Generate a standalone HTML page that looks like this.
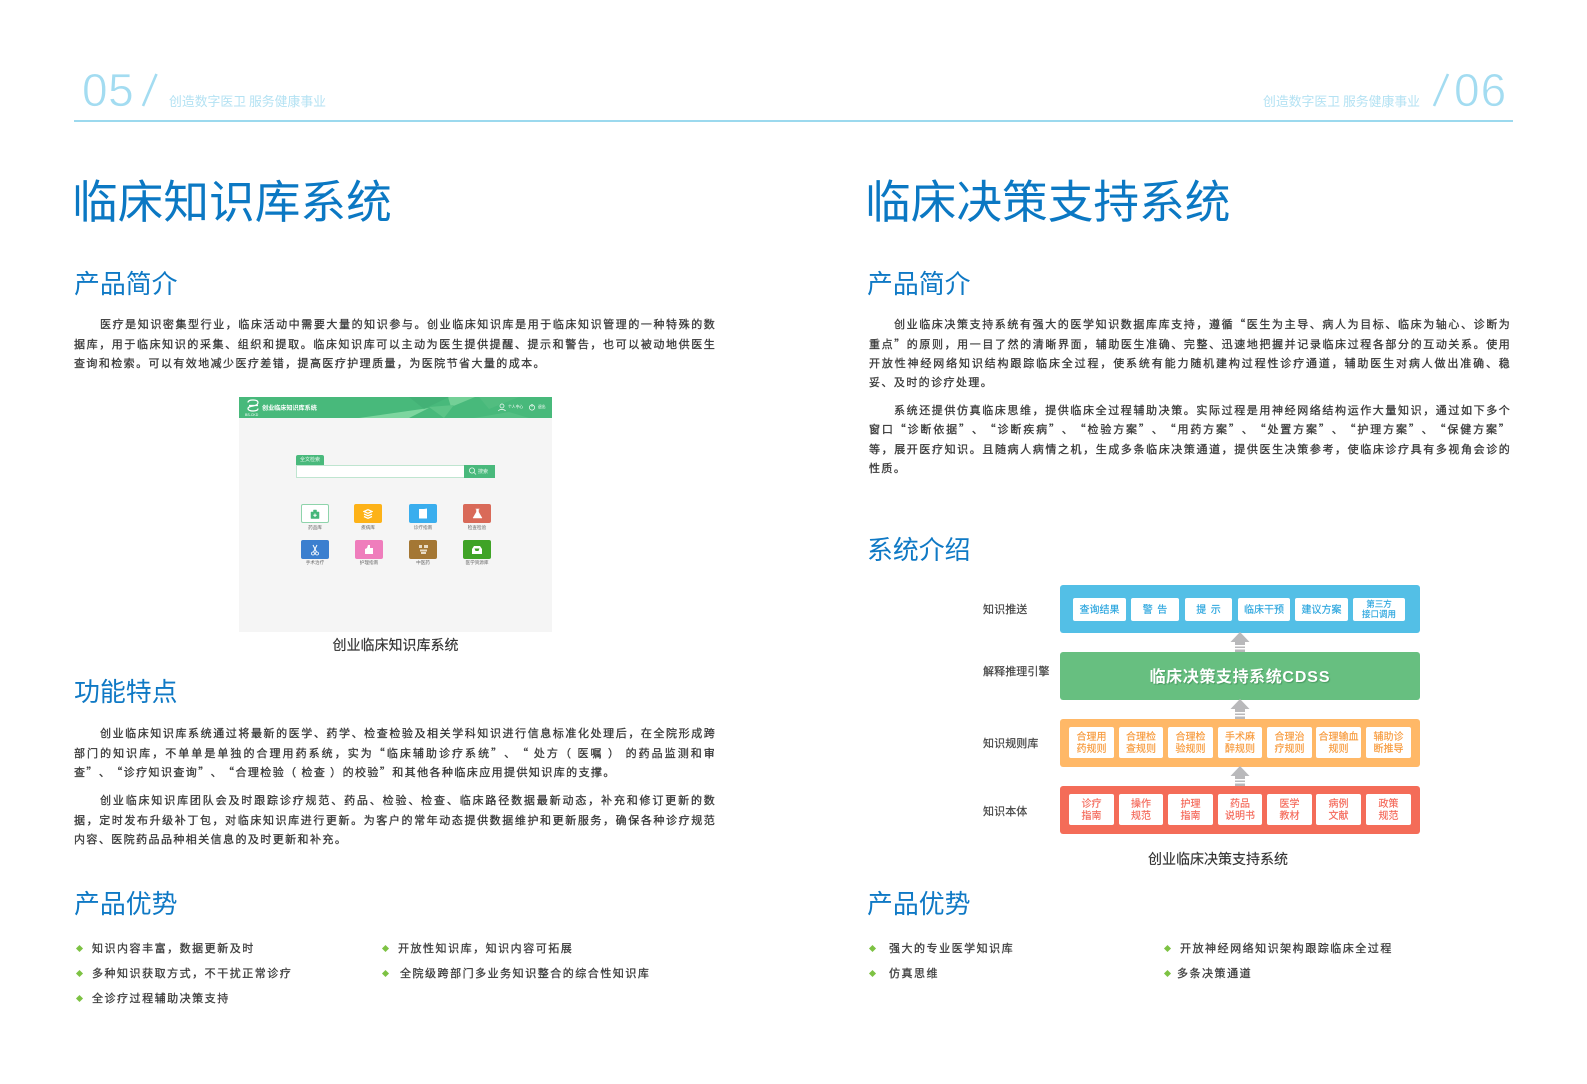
<!DOCTYPE html>
<html lang="zh-CN">
<head>
<meta charset="utf-8">
<title>临床知识库系统 / 临床决策支持系统</title>
<style>
html,body{margin:0;padding:0;background:#fff}
#p{position:relative;width:1587px;height:1084px;overflow:hidden;background:#fff;font-family:"Noto Sans CJK SC","Liberation Sans",sans-serif;text-spacing-trim:space-all}
#p div,#p span.a{position:absolute}
.num{font-family:"Liberation Sans","Noto Sans CJK SC",sans-serif;font-size:46px;line-height:46px;color:#a3dcf1;top:67px;white-space:nowrap;font-weight:400;-webkit-text-stroke:.7px #fff;paint-order:normal}
.sub{font-size:12.85px;line-height:18px;color:#b4e2f3;top:92px;white-space:nowrap}
.t{font-size:45.7px;line-height:60px;color:#0b78c3;top:169px;white-space:nowrap}
.h{font-size:25.9px;line-height:34px;color:#0f79c5;white-space:nowrap}
.l{font-size:11px;line-height:20px;letter-spacing:1.2px;color:#3b3b3b;width:642px;text-align:justify;text-align-last:justify;-webkit-text-stroke:.3px #3b3b3b}
.e{text-align-last:left;letter-spacing:1.42px}
.cap{font-size:14px;line-height:20px;color:#333;white-space:nowrap;text-align:center;-webkit-text-stroke:.15px #333}
.b{font-size:11px;line-height:20px;letter-spacing:1.52px;color:#3f3f3f;white-space:nowrap;-webkit-text-stroke:.3px #3f3f3f}
.d{width:5px;height:5px;background:#7dc243;transform:rotate(45deg)}
.box{border-radius:3px;left:1060px;width:360px;height:48px}
.c{background:#fff;border-radius:2px;text-align:center;font-size:10px;display:flex;align-items:center;justify-content:center;line-height:12px;box-sizing:border-box;padding-bottom:1px;-webkit-text-stroke:.15px currentColor}
.lab{left:983px;font-size:11px;line-height:16px;color:#444;white-space:nowrap;letter-spacing:.1px;-webkit-text-stroke:.2px #444}
.ai{width:28px;height:19px;border-radius:2px;display:flex;align-items:center;justify-content:center;filter:blur(.35px)}
.al{font-size:4.6px;line-height:8px;color:#666;white-space:nowrap;text-align:center;width:40px;filter:blur(.3px)}
</style>
</head>
<body>
<div id="p">
<!-- header -->
<div class="num" style="left:82px;letter-spacing:.5px">05</div>
<svg style="position:absolute;left:140px;top:72px" width="20" height="36"><line x1="3" y1="34" x2="16.500" y2="2" stroke="#a3dcf1" stroke-width="2.600"/></svg>
<div class="sub" style="left:169px">创造数字医卫 服务健康事业</div>
<div class="sub" style="left:1263px">创造数字医卫 服务健康事业</div>
<svg style="position:absolute;left:1431px;top:72px" width="22" height="36"><line x1="3" y1="34" x2="17" y2="2" stroke="#a3dcf1" stroke-width="2.600"/></svg>
<div class="num" style="left:1454px;letter-spacing:1px">06</div>
<div style="left:74px;top:120px;width:1439px;height:2px;background:#9cd9ee"></div>

<!-- left page -->
<div class="t" style="left:72px">临床知识库系统</div>
<div class="h" style="left:74px;top:265.500px">产品简介</div>
<div class="l" style="left:100px;top:314px;width:616px">医疗是知识密集型行业，临床活动中需要大量的知识参与。创业临床知识库是用于临床知识管理的一种特殊的数</div>
<div class="l" style="left:74px;top:333.500px">据库，用于临床知识的采集、组织和提取。临床知识库可以主动为医生提供提醒、提示和警告，也可以被动地供医生</div>
<div class="l e" style="left:74px;top:353px">查询和检索。可以有效地减少医疗差错，提高医疗护理质量，为医院节省大量的成本。</div>

<!-- app screenshot -->
<div style="left:239px;top:397px;width:313px;height:235px;background:#f5f5f5"></div>
<div style="left:239px;top:397px;width:313px;height:21px;background:#48b97b;overflow:hidden;filter:blur(.3px)">
<svg style="position:absolute;left:0;top:0" width="313" height="21">
<polygon points="120,21 190,11 170,21" fill="#7dd69f"/>
<polygon points="209,0 236,0 212,10" fill="#74d097"/>
<polygon points="190,10 215,8 205,21" fill="#5cc487"/>
<polygon points="170,0 210,0 185,12" fill="#43b176"/>
<polygon points="240,0 280,0 250,12" fill="#52bd80"/>
<polygon points="235,21 270,15 290,21" fill="#55c084"/>
<path d="M9 5.500c0-2 2-2.500 5-2.500s5 .5 5 2.500-2 3-5 3.500-5 1-5 2.500 2 2.500 5 2.500 5-.5 5-2.500M10 8.500h9" fill="none" stroke="#fff" stroke-width="1.200"/>
</svg>
<span class="a" style="left:23px;top:5.500px;font-size:6.100px;line-height:10px;color:#fff;font-weight:700;white-space:nowrap">创业临床知识库系统</span>
<span class="a" style="left:6px;top:15.500px;font-size:3.500px;line-height:5px;color:#fff;white-space:nowrap;font-family:'Liberation Sans',sans-serif">BS-CKD</span>
<svg style="position:absolute;left:257px;top:6px" width="45" height="10"><circle cx="6" cy="3" r="2" fill="none" stroke="#fff" stroke-width=".7"/><path d="M2.500 8c.5-2 6-2 7 0" fill="none" stroke="#fff" stroke-width=".7"/><circle cx="36" cy="4.500" r="2.600" fill="none" stroke="#fff" stroke-width=".7"/><line x1="36" y1="1" x2="36" y2="4" stroke="#fff" stroke-width=".7"/></svg>
<span class="a" style="left:269px;top:7px;font-size:3.800px;line-height:7px;color:#fff;white-space:nowrap">个人中心</span>
<span class="a" style="left:299px;top:7px;font-size:3.800px;line-height:7px;color:#fff;white-space:nowrap">退出</span>
</div>
<div style="left:296px;top:455px;width:28px;height:10px;background:#49b97c;border-radius:2px 2px 0 0;font-size:5px;line-height:10px;color:#e5f7ec;text-align:center">全文检索</div>
<div style="left:296px;top:465px;width:167px;height:10.500px;background:#fff;border:1px solid #bfe5d0;border-right:0"></div>
<div style="left:464px;top:464.500px;width:31px;height:13px;background:#49b97c;font-size:5px;line-height:13px;color:#e5f7ec;padding-left:14px;box-sizing:border-box">搜索</div>
<svg style="position:absolute;left:468px;top:466px" width="9" height="10"><circle cx="4" cy="4.500" r="2.600" fill="none" stroke="#e8f8ee" stroke-width=".8"/><line x1="6" y1="6.500" x2="8" y2="8.500" stroke="#e8f8ee" stroke-width=".8"/></svg>

<div class="ai" style="left:301px;top:504px;background:#fff;box-sizing:border-box;border:1px solid #8ed4ab"><svg width="10" height="10"><path d="M1 3h8v6.500H1zM3.500 3V1h3v2" fill="#45b67a" stroke="#45b67a" stroke-width=".5"/><path d="M5 4.500v3.500M3.300 6.200h3.400" stroke="#fff" stroke-width="1"/></svg></div>
<div class="ai" style="left:354px;top:504px;background:#fdb218"><svg width="10" height="10"><path d="M1 2.500l4-1.800 4 1.800-4 1.800zM1 5l4 1.800L9 5M1 7.500l4 1.800 4-1.800" fill="none" stroke="#fff" stroke-width="1.300"/></svg></div>
<div class="ai" style="left:409px;top:504px;background:#3aaeee"><svg width="10" height="11"><path d="M1 1h5l3-.5v10H1z" fill="#fff"/></svg></div>
<div class="ai" style="left:463px;top:504px;background:#d96a59"><svg width="11" height="11"><path d="M3.500 1h4M4.500 1v3L1 10h9L6.500 4V1" fill="#fff" stroke="#fff" stroke-width=".5"/></svg></div>
<div class="ai" style="left:301px;top:540px;background:#3b7fcf"><svg width="10" height="12"><path d="M3 1l3.500 7M7 1L3.500 8" stroke="#fff" stroke-width="1"/><circle cx="3" cy="9.500" r="1.500" fill="none" stroke="#fff" stroke-width=".8"/><circle cx="7" cy="9.500" r="1.500" fill="none" stroke="#fff" stroke-width=".8"/></svg></div>
<div class="ai" style="left:355px;top:540px;background:#ef7dbc"><svg width="10" height="11"><path d="M1 10V5l2-1 1-3h2v3h3v6z" fill="#fff"/></svg></div>
<div class="ai" style="left:409px;top:540px;background:#a47734"><svg width="11" height="11"><path d="M1 1h3v3H1zM6 1h4v3H6zM2 5.500h7v2H2zM3 8h5v2H3z" fill="#e9dcc6"/></svg></div>
<div class="ai" style="left:463px;top:540px;background:#3fa326"><svg width="12" height="10"><path d="M1 4l2-3h6l2 3v5H1z" fill="#fff"/><path d="M3.500 3.500h5L7.500 6h-3z" fill="#3fa326"/></svg></div>

<div class="al" style="left:295px;top:524px">药品库</div>
<div class="al" style="left:348px;top:524px">疾病库</div>
<div class="al" style="left:403px;top:524px">诊疗指南</div>
<div class="al" style="left:457px;top:524px">检查检验</div>
<div class="al" style="left:295px;top:559px">手术治疗</div>
<div class="al" style="left:349px;top:559px">护理指南</div>
<div class="al" style="left:403px;top:559px">中医药</div>
<div class="al" style="left:457px;top:559px">医学资源库</div>

<div class="cap" style="left:239px;top:635px;width:313px">创业临床知识库系统</div>

<div class="h" style="left:74px;top:674px">功能特点</div>
<div class="l" style="left:100px;top:723px;width:616px">创业临床知识库系统通过将最新的医学、药学、检查检验及相关学科知识进行信息标准化处理后，在全院形成跨</div>
<div class="l" style="left:74px;top:743px">部门的知识库，不单单是单独的合理用药系统，实为“临床辅助诊疗系统”、“ 处方（ 医嘱 ） 的药品监测和审</div>
<div class="l e" style="left:74px;top:762px">查”、“诊疗知识查询”、“合理检验（ 检查 ）的校验”和其他各种临床应用提供知识库的支撑。</div>
<div class="l" style="left:100px;top:789.500px;width:616px">创业临床知识库团队会及时跟踪诊疗规范、药品、检验、检查、临床路径数据最新动态，补充和修订更新的数</div>
<div class="l" style="left:74px;top:810px">据，定时发布升级补丁包，对临床知识库进行更新。为客户的常年动态提供数据维护和更新服务，确保各种诊疗规范</div>
<div class="l e" style="left:74px;top:829px">内容、医院药品品种相关信息的及时更新和补充。</div>

<div class="h" style="left:74px;top:886px">产品优势</div>
<div class="d" style="left:76.500px;top:946px"></div><div class="b" style="left:92px;top:937.500px">知识内容丰富，数据更新及时</div>
<div class="d" style="left:76.500px;top:971px"></div><div class="b" style="left:92px;top:962.500px">多种知识获取方式，不干扰正常诊疗</div>
<div class="d" style="left:76.500px;top:996px"></div><div class="b" style="left:92px;top:987.500px">全诊疗过程辅助决策支持</div>
<div class="d" style="left:382.500px;top:946px"></div><div class="b" style="left:398px;top:937.500px">开放性知识库，知识内容可拓展</div>
<div class="d" style="left:382.500px;top:971px"></div><div class="b" style="left:400px;top:962.500px">全院级跨部门多业务知识整合的综合性知识库</div>

<!-- right page -->
<div class="t" style="left:865px">临床决策支持系统</div>
<div class="h" style="left:867px;top:265.500px">产品简介</div>
<div class="l" style="left:894px;top:314px;width:617px">创业临床决策支持系统有强大的医学知识数据库库支持，遵循“医生为主导、病人为目标、临床为轴心、诊断为</div>
<div class="l" style="left:869px;top:333.500px;width:642px">重点”的原则，用一目了然的清晰界面，辅助医生准确、完整、迅速地把握并记录临床过程各部分的互动关系。使用</div>
<div class="l" style="left:869px;top:352.500px;width:642px">开放性神经网络知识结构跟踪临床全过程，使系统有能力随机建构过程性诊疗通道，辅助医生对病人做出准确、稳</div>
<div class="l e" style="left:869px;top:371.500px">妥、及时的诊疗处理。</div>
<div class="l" style="left:894px;top:400px;width:617px">系统还提供仿真临床思维，提供临床全过程辅助决策。实际过程是用神经网络结构运作大量知识，通过如下多个</div>
<div class="l" style="left:869px;top:419px;width:642px">窗口“诊断依据”、“诊断疾病”、“检验方案”、“用药方案”、“处置方案”、“护理方案”、“保健方案”</div>
<div class="l" style="left:869px;top:438.500px;width:642px">等，展开医疗知识。且随病人病情之机，生成多条临床决策通道，提供医生决策参考，使临床诊疗具有多视角会诊的</div>
<div class="l e" style="left:869px;top:457.500px">性质。</div>

<div class="h" style="left:867px;top:532px">系统介绍</div>

<!-- diagram -->
<div class="lab" style="top:601px">知识推送</div>
<div class="lab" style="top:662.500px">解释推理引擎</div>
<div class="lab" style="top:735px">知识规则库</div>
<div class="lab" style="top:802.500px">知识本体</div>

<div class="box" style="top:585px;background:#53bfe6"></div>
<div class="box" style="top:652px;background:#67bf80"></div>
<div class="box" style="top:719px;background:#ffb867"></div>
<div class="box" style="top:786px;background:#f46c58"></div>

<div class="c" style="left:1073px;top:598px;width:53px;height:23px;color:#2aa5de">查询结果</div>
<div class="c" style="left:1131px;top:598px;width:48px;height:23px;color:#2aa5de">警&nbsp;&nbsp;告</div>
<div class="c" style="left:1185px;top:598px;width:47px;height:23px;color:#2aa5de">提&nbsp;&nbsp;示</div>
<div class="c" style="left:1238px;top:598px;width:52px;height:23px;color:#2aa5de">临床干预</div>
<div class="c" style="left:1295px;top:598px;width:53px;height:23px;color:#2aa5de">建议方案</div>
<div class="c" style="left:1353px;top:598px;width:52px;height:23px;color:#2aa5de;font-size:8.500px;line-height:10.500px">第三方<br>接口调用</div>

<div style="left:1095px;top:663px;width:290px;height:24px;line-height:24px;text-align:center;font-size:16px;font-weight:700;color:#fff;letter-spacing:.6px;white-space:nowrap;text-shadow:1px 1px 1px rgba(40,110,60,.45)">临床决策支持系统<span style="font-family:'Liberation Sans',sans-serif;letter-spacing:.9px">CDSS</span></div>

<div class="c" style="left:1069px;top:727px;width:45px;height:31px;color:#f79a3c">合理用<br>药规则</div>
<div class="c" style="left:1119px;top:727px;width:44px;height:31px;color:#f79a3c">合理检<br>查规则</div>
<div class="c" style="left:1168px;top:727px;width:45px;height:31px;color:#f79a3c">合理检<br>验规则</div>
<div class="c" style="left:1218px;top:727px;width:44px;height:31px;color:#f79a3c">手术麻<br>醉规则</div>
<div class="c" style="left:1267px;top:727px;width:45px;height:31px;color:#f79a3c">合理治<br>疗规则</div>
<div class="c" style="left:1316px;top:727px;width:45px;height:31px;color:#f79a3c">合理输血<br>规则</div>
<div class="c" style="left:1366px;top:727px;width:45px;height:31px;color:#f79a3c">辅助诊<br>断推导</div>

<div class="c" style="left:1069px;top:794px;width:45px;height:31px;color:#f4695a">诊疗<br>指南</div>
<div class="c" style="left:1119px;top:794px;width:44px;height:31px;color:#f4695a">操作<br>规范</div>
<div class="c" style="left:1168px;top:794px;width:45px;height:31px;color:#f4695a">护理<br>指南</div>
<div class="c" style="left:1218px;top:794px;width:44px;height:31px;color:#f4695a">药品<br>说明书</div>
<div class="c" style="left:1267px;top:794px;width:45px;height:31px;color:#f4695a">医学<br>教材</div>
<div class="c" style="left:1316px;top:794px;width:45px;height:31px;color:#f4695a">病例<br>文献</div>
<div class="c" style="left:1366px;top:794px;width:45px;height:31px;color:#f4695a">政策<br>规范</div>

<svg style="position:absolute;left:1230px;top:632px" width="20" height="20"><path d="M10 0l9.500 10H15v3H5v-3H.5z" fill="#b9b9bb"/><path d="M5 14.500h10V16H5zM5 17.500h10V20H5z" fill="#b9b9bb"/></svg>
<svg style="position:absolute;left:1230px;top:699px" width="20" height="20"><path d="M10 0l9.500 10H15v3H5v-3H.5z" fill="#b9b9bb"/><path d="M5 14.500h10V16H5zM5 17.500h10V20H5z" fill="#b9b9bb"/></svg>
<svg style="position:absolute;left:1230px;top:766px" width="20" height="20"><path d="M10 0l9.500 10H15v3H5v-3H.5z" fill="#b9b9bb"/><path d="M5 14.500h10V16H5zM5 17.500h10V20H5z" fill="#b9b9bb"/></svg>

<div class="cap" style="left:1068px;top:849px;width:300px">创业临床决策支持系统</div>

<div class="h" style="left:867px;top:886px">产品优势</div>
<div class="d" style="left:869.500px;top:946px"></div><div class="b" style="left:889px;top:937.500px">强大的专业医学知识库</div>
<div class="d" style="left:869.500px;top:971px"></div><div class="b" style="left:889px;top:962.500px">仿真思维</div>
<div class="d" style="left:1164.500px;top:946px"></div><div class="b" style="left:1180px;top:937.500px">开放神经网络知识架构跟踪临床全过程</div>
<div class="d" style="left:1164.500px;top:971px"></div><div class="b" style="left:1177px;top:962.500px">多条决策通道</div>
</div>
</body>
</html>
